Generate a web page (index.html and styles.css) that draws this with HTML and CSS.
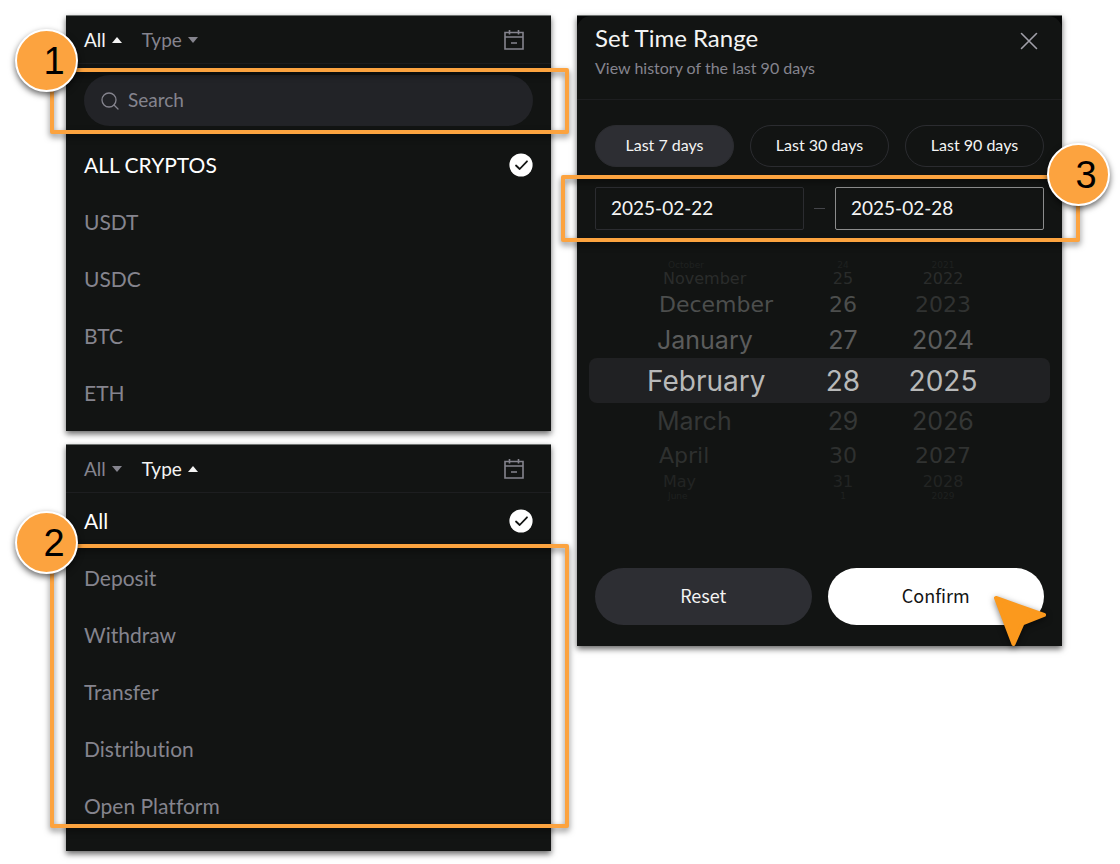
FILE: index.html
```html
<!DOCTYPE html>
<html lang="en">
  <head>
    <meta charset="utf-8">
    <meta name="viewport" content="width=device-width, initial-scale=1">
    <title>Transaction History Filters</title>
    <link rel="stylesheet" href="styles.css">
  </head>
  <body>
    <svg class="sprite" aria-hidden="true">
      <symbol id="icon-calendar" viewBox="0 0 22 22">
        <path d="M2 3.5h18v16.5H2zM2 8h18M6.5 1v4.5M15.500 1v4.500M8 14h6" fill="none" stroke="currentColor" stroke-width="1.6"/>
      </symbol>
      <symbol id="icon-check" viewBox="0 0 24 24">
        <circle cx="12" cy="12" r="11.600" fill="#fff"/>
        <path d="M7 12.500l3.700 3.500 7.300-7.700" fill="none" stroke="#121413" stroke-width="1.800" stroke-linecap="round" stroke-linejoin="round"/>
      </symbol>
    </svg>

    <main class="guide">
      <div class="column">
        <section class="panel" aria-label="Crypto filter">
          <header class="filters">
            <button class="filter open">All</button>
            <button class="filter">Type</button>
            <button class="calendar" aria-label="Date range"><svg><use href="#icon-calendar"/></svg></button>
          </header>
          <div class="search marked">
            <label class="search-box">
              <svg viewBox="0 0 18 18" aria-hidden="true">
                <circle cx="8" cy="8" r="7" fill="none" stroke="currentColor" stroke-width="1.300"/>
                <path d="M13 13l4 4" stroke="currentColor" stroke-width="1.300" stroke-linecap="round"/>
              </svg>
              <input type="search" placeholder="Search" aria-label="Search">
            </label>
            <div class="frame"></div>
            <span class="step">1</span>
          </div>
          <ul class="options">
            <li><button class="option selected">ALL CRYPTOS<svg><use href="#icon-check"/></svg></button></li>
            <li><button class="option">USDT</button></li>
            <li><button class="option">USDC</button></li>
            <li><button class="option">BTC</button></li>
            <li><button class="option">ETH</button></li>
          </ul>
        </section>

        <section class="panel types" aria-label="Type filter">
          <header class="filters">
            <button class="filter">All</button>
            <button class="filter open">Type</button>
            <button class="calendar" aria-label="Date range"><svg><use href="#icon-calendar"/></svg></button>
          </header>
          <button class="option selected">All<svg><use href="#icon-check"/></svg></button>
          <div class="type-list marked">
            <ul class="options">
              <li><button class="option">Deposit</button></li>
              <li><button class="option">Withdraw</button></li>
              <li><button class="option">Transfer</button></li>
              <li><button class="option">Distribution</button></li>
              <li><button class="option">Open Platform</button></li>
            </ul>
            <div class="frame"></div>
            <span class="step">2</span>
          </div>
        </section>
      </div>

      <section class="panel range">
        <header class="range-header">
          <div>
            <h1>Set Time Range</h1>
            <p>View history of the last 90 days</p>
          </div>
          <button class="close" aria-label="Close">
            <svg viewBox="0 0 18 18"><path d="M1.500 1.500l15 15M16.500 1.500l-15 15" stroke="currentColor" stroke-width="1.600" stroke-linecap="round"/></svg>
          </button>
        </header>
        <div class="presets">
          <button class="preset active">Last 7 days</button>
          <button class="preset">Last 30 days</button>
          <button class="preset">Last 90 days</button>
        </div>
        <div class="dates marked">
          <input type="text" value="2025-02-22" aria-label="Start date">
          <span class="dash"></span>
          <input class="active" type="text" value="2025-02-28" aria-label="End date">
          <div class="frame"></div>
          <span class="step">3</span>
        </div>

        <div class="wheel">
          <div class="row edge"><span>October</span><span>24</span><span>2021</span></div>
          <div class="row far"><span>November</span><span>25</span><span>2022</span></div>
          <div class="row mid"><span>December</span><span>26</span><span>2023</span></div>
          <div class="row near"><span>January</span><span>27</span><span>2024</span></div>
          <div class="row current"><span>February</span><span>28</span><span>2025</span></div>
          <div class="row near off"><span>March</span><span>29</span><span>2026</span></div>
          <div class="row mid off"><span>April</span><span>30</span><span>2027</span></div>
          <div class="row far off"><span>May</span><span>31</span><span>2028</span></div>
          <div class="row edge"><span>June</span><span>1</span><span>2029</span></div>
        </div>

        <footer class="actions">
          <button class="action">Reset</button>
          <button class="action confirm">Confirm</button>
          <svg class="cursor" viewBox="0 0 52 50" aria-hidden="true">
            <path d="M2 2L50 19 28.500 27.500 19.500 48Z" fill="#fb991d" stroke="#fb991d" stroke-width="4" stroke-linejoin="round"/>
          </svg>
        </footer>
      </section>
    </main>
  </body>
</html>
```
FILE: styles.css
```css
:root {
  --panel: #121413;
  --line: #1d1e20;
  --muted: #85848e;
  --text: #f4f4f4;
  --accent: #fca33f;
}

*, *:before, *:after {
  box-sizing: border-box;
}

body {
  margin: 0;
  background: #fff;
  color: var(--text);
  font-family: Lato, "Liberation Sans", sans-serif;
  font-size: 19px;
  line-height: 24px;
  font-variant-ligatures: none;
}

button, input {
  font: inherit;
  font-variant-ligatures: none;
  color: inherit;
  background: none;
  border: none;
  padding: 0;
  margin: 0;
}

ul {
  margin: 0;
  padding: 0;
  list-style: none;
}

svg {
  display: block;
}

.sprite {
  position: absolute;
  width: 0;
  height: 0;
}

.guide {
  display: grid;
  grid-template-columns: repeat(2, minmax(0, 1fr));
  align-items: start;
  gap: 26px;
  padding: 15px 58px 13px 66px;
}

.column {
  display: grid;
  gap: 13px;
}

.panel {
  background: var(--panel);
  border-top: 1px solid #707472;
  box-shadow: 0 3px 6px rgba(0, 0, 0, 0.6);
  padding-bottom: 9px;
}

.types {
  padding-bottom: 16px;
}

/*----- FILTER PANELS -----*/

.filters {
  display: flex;
  align-items: center;
  gap: 20px;
  height: 48px;
  padding: 0 27px 0 18px;
  border-bottom: 1px solid var(--line);
}

.filter {
  display: flex;
  align-items: center;
  gap: 6px;
  color: var(--muted);
}

.filter:after {
  content: "";
  border: 5px solid transparent;
  border-top: 6px solid currentColor;
  border-bottom: 0;
}

.filter.open {
  color: var(--text);
}

.filter.open:after {
  border-top: 0;
  border-bottom: 6px solid currentColor;
}

.calendar {
  margin-left: auto;
  color: var(--muted);
}

.calendar svg {
  width: 22px;
  height: 22px;
  margin-right: -1px;
}

.search {
  padding: 11px 18px;
}

.search-box {
  display: flex;
  align-items: center;
  gap: 9px;
  height: 51px;
  padding: 0 17px;
  border-radius: 26px;
  background: #222327;
  color: var(--muted);
}

.search-box svg {
  width: 18px;
  height: 18px;
}

.search-box input {
  flex: 1;
  min-width: 0;
  padding-bottom: 2px;
  outline: none;
}

.search-box input::placeholder {
  color: var(--muted);
  opacity: 1;
}

.option {
  display: flex;
  align-items: center;
  justify-content: space-between;
  width: 100%;
  height: 57px;
  padding: 0 18px 1px;
  font-size: 21px;
  color: var(--muted);
}

.option.selected {
  color: #fff;
}

.option svg {
  width: 24px;
  height: 24px;
}

/*----- STEP MARKERS -----*/

.marked {
  position: relative;
}

.frame {
  position: absolute;
  left: -16px;
  right: -18px;
  border: 4px solid var(--accent);
  border-radius: 2px;
  filter: drop-shadow(0 3px 3px rgba(0, 0, 0, 0.5));
  pointer-events: none;
}

.step {
  position: absolute;
  left: -51px;
  width: 63px;
  height: 63px;
  padding-left: 15px;
  border: 2px solid #fff;
  border-radius: 50%;
  background: var(--accent);
  box-shadow: 0 3px 6px rgba(0, 0, 0, 0.6);
  color: #000;
  font-family: "Liberation Sans", sans-serif;
  font-size: 38px;
  line-height: 60px;
  text-align: center;
}

.search .frame {
  top: 4px;
  bottom: 3px;
}

.search .step {
  top: -35px;
}

.type-list .frame {
  top: -6px;
  bottom: 7px;
}

.type-list .step {
  top: -39px;
}

.dates .frame {
  top: -12px;
  bottom: -12px;
}

.dates .step {
  top: -44px;
  left: auto;
  right: -48px;
}

/*----- TIME RANGE -----*/

.range {
  padding-bottom: 21px;
  background: linear-gradient(#060707 14px, var(--panel) 14px);
}

.range-header {
  display: flex;
  justify-content: space-between;
  align-items: flex-start;
  height: 84px;
  padding: 9px 24px 0 18px;
  border-bottom: 1px solid var(--line);
  border-radius: 14px 14px 0 0;
  background: var(--panel);
}

.range-header h1 {
  margin: 0 0 7px;
  font-size: 24px;
  font-weight: 400;
  line-height: 26px;
}

.range-header p {
  margin: 0;
  font-size: 16px;
  line-height: 20px;
  color: var(--muted);
}

.close {
  padding-top: 7px;
  color: #a09fa8;
}

.close svg {
  width: 18px;
  height: 18px;
}

.presets {
  display: grid;
  grid-template-columns: repeat(3, 1fr);
  gap: 16px;
  padding: 25px 18px 20px;
}

.preset {
  height: 42px;
  padding-bottom: 2px;
  border: 1px solid #2b2c30;
  border-radius: 21px;
  font-size: 16px;
}

.preset.active {
  background: #2d2e33;
}

.dates {
  display: flex;
  align-items: center;
  padding: 0 18px;
}

.dates input {
  flex: 1;
  min-width: 0;
  height: 43px;
  padding: 0 15px 2px;
  border: 1px solid #2b2c30;
  border-radius: 2px;
}

.dates input.active {
  border-color: #8b8c8c;
}

.dash {
  width: 11px;
  height: 1px;
  margin: 0 10px;
  background: #44454a;
}

.wheel {
  margin: 30px 12px 67px;
  font-family: "DejaVu Sans", sans-serif;
}

.row {
  display: grid;
  grid-template-columns: 1fr 72px 128px;
  align-items: center;
  padding: 0 43px 0 70px;
  text-align: center;
}

.row span:first-child {
  text-align: left;
}

.current {
  height: 45px;
  padding-left: 58px;
  border-radius: 8px;
  background: #202123;
  color: #b8b9b9;
  font-family: Inter, sans-serif;
  font-size: 28px;
}

.near {
  height: 36px;
  padding-left: 68px;
  color: #5b5c5c;
  font-family: Inter, sans-serif;
  font-size: 25px;
}

.mid {
  height: 34px;
  color: #4c4e4d;
  font-size: 22px;
}

.far {
  height: 18px;
  padding-left: 74px;
  color: #2a2c2b;
  font-size: 16px;
  line-height: 18px;
}

.edge {
  height: 10px;
  padding-left: 79px;
  color: #1f2120;
  font-size: 9px;
  line-height: 10px;
}

.mid span:last-child {
  color: #303231;
}

.near.off {
  color: #353736;
}

.mid.off {
  color: #2e302f;
}

.far.off {
  color: #222423;
}

.actions {
  position: relative;
  display: grid;
  grid-template-columns: 1fr 1fr;
  gap: 16px;
  padding: 0 18px;
}

.action {
  height: 57px;
  padding-bottom: 4px;
  border-radius: 29px;
  background: #2d2e33;
  font-family: "Noto Sans CJK SC", sans-serif;
  font-size: 18px;
}

.confirm {
  background: #fff;
  color: #121413;
}

.cursor {
  position: absolute;
  right: 16px;
  top: 28px;
  width: 52px;
  height: 50px;
  overflow: visible;
  filter: drop-shadow(0 2px 3px rgba(0, 0, 0, 0.5));
}
```
